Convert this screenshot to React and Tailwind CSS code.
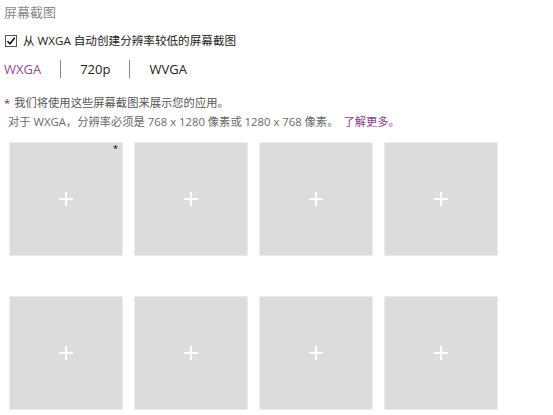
const font = { fontFamily: '"Segoe UI", "Open Sans", "Noto Sans CJK SC", sans-serif' };

function Tile({ star }) {
  return (
    <div className="relative w-[114px] h-[114px] bg-[#dcdcdc] border border-[#ececec] flex items-center justify-center">
      {star && <span className="absolute top-[1px] right-[4px] text-[9px] leading-none text-black">*</span>}
      <div className="relative w-[14px] h-[14px]">
        <div className="absolute left-0 top-[6px] w-[14px] h-[2px] bg-white" />
        <div className="absolute top-0 left-[6px] w-[2px] h-[14px] bg-white" />
      </div>
    </div>
  );
}

export default function App() {
  return (
    <div className="w-[553px] h-[415px] bg-white overflow-hidden" style={font}>
      <div className="pt-[3px] pl-[4px] text-[13px] leading-[18px] text-[#8a8a8a]">屏幕截图</div>

      <div className="mt-[12px] flex items-center pl-[5px] text-[11.6px] leading-[16px] text-[#222]">
        <span className="w-[12px] h-[12px] border border-[#555] bg-white flex items-center justify-center mr-[6px]">
          <svg width="10" height="10" viewBox="0 0 10 10">
            <path d="M1.5 5.2 L4 7.8 L8.7 1.8" fill="none" stroke="#111" strokeWidth="1.6" />
          </svg>
        </span>
        <span>从 WXGA 自动创建分辨率较低的屏幕截图</span>
      </div>

      <div className="mt-[10px] flex items-center pl-[4px] text-[13px] leading-[20px]">
        <span className="text-[#9b4a98]">WXGA</span>
        <span className="mx-[19px] w-px h-[18px] bg-[#888]" />
        <span className="text-[#222]">720p</span>
        <span className="mx-[19px] w-px h-[18px] bg-[#888]" />
        <span className="text-[#222]">WVGA</span>
      </div>

      <div className="mt-[14px] pl-[4px] text-[11.3px] leading-[19px]">
        <div className="text-[#555]">
          <span className="text-[#a0283c] mr-[1px]">*</span> 我们将使用这些屏幕截图来展示您的应用。
        </div>
        <div className="pl-[4px] text-[#6a6a6a]">
          对于 WXGA，分辨率必须是 768 x 1280 像素或 1280 x 768 像素。 <span className="ml-[2px] text-[#8c3f8c]">了解更多。</span>
        </div>
      </div>

      <div className="mt-[11px] pl-[9px] grid grid-cols-[repeat(4,114px)] gap-x-[11px] gap-y-[40px]">
        <Tile star />
        <Tile />
        <Tile />
        <Tile />
        <Tile />
        <Tile />
        <Tile />
        <Tile />
      </div>
    </div>
  );
}
